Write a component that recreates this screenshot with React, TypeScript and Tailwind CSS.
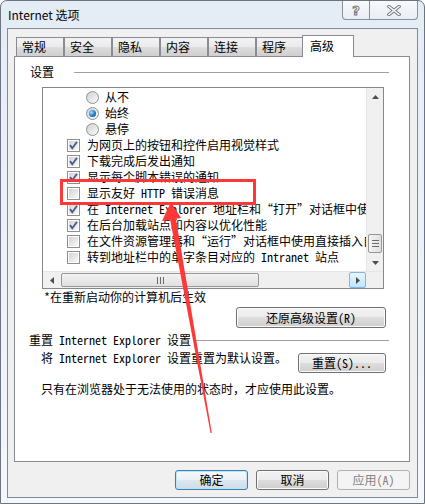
import type { ReactNode } from 'react'

const mono = 'font-["Noto_Sans_Mono_CJK_SC","Noto_Sans_CJK_SC",sans-serif]'

const tabs = ['常规', '安全', '隐私', '内容', '连接', '程序']

const rows: { kind: 'radio' | 'check'; on: boolean; text: string }[] = [
  { kind: 'radio', on: false, text: '从不' },
  { kind: 'radio', on: true, text: '始终' },
  { kind: 'radio', on: false, text: '悬停' },
  { kind: 'check', on: true, text: '为网页上的按钮和控件启用视觉样式' },
  { kind: 'check', on: true, text: '下载完成后发出通知' },
  { kind: 'check', on: true, text: '显示每个脚本错误的通知' },
  { kind: 'check', on: false, text: '显示友好 HTTP 错误消息' },
  { kind: 'check', on: true, text: '在 Internet Explorer 地址栏和“打开”对话框中使用直接插入自动完成' },
  { kind: 'check', on: true, text: '在后台加载站点和内容以优化性能' },
  { kind: 'check', on: false, text: '在文件资源管理器和“运行”对话框中使用直接插入自动完成' },
  { kind: 'check', on: false, text: '转到地址栏中的单字条目对应的 Intranet 站点' },
]

function Check({ on }: { on: boolean }) {
  return (
    <span className="relative flex h-[13px] w-[13px] shrink-0 border border-[#8e8f8f] bg-white p-px">
      <span className="h-full w-full bg-linear-to-br from-[#d2d4d8] to-[#f8f8f8]" />
      {on && (
        <svg className="absolute left-0 top-0" width="11" height="11" viewBox="0 0 11 11">
          <path d="M2 5.2 L4.3 8.2 L9 1.8" fill="none" stroke="#4a5f8e" strokeWidth="1.9" />
        </svg>
      )}
    </span>
  )
}

function Radio({ on }: { on: boolean }) {
  return (
    <span className="flex h-[13px] w-[13px] shrink-0 items-center justify-center rounded-full border border-[#8e8f8f] bg-linear-to-br from-[#d0d2d6] to-[#fafafa]">
      {on && (
        <span className="h-[7px] w-[7px] rounded-full bg-[radial-gradient(circle_at_35%_35%,#a6e0ff,#1f78c8_55%,#0b3f80)]" />
      )}
    </span>
  )
}

function Btn({ children, className = '' }: { children: ReactNode; className?: string }) {
  return (
    <div
      className={`flex items-center justify-center rounded-[3px] border border-[#707070] bg-[linear-gradient(#f2f2f2,#ebebeb_50%,#dddddd_50%,#cfcfcf)] text-[12px] leading-none text-black shadow-[inset_0_0_0_1px_#fbfbfb] ${className}`}
    >
      {children}
    </div>
  )
}

function Tri({ dir }: { dir: 'up' | 'down' | 'left' | 'right' }) {
  const pts = {
    up: '0,4 3.5,0 7,4',
    down: '0,0 3.5,4 7,0',
    left: '4,0 0,3.5 4,7',
    right: '0,0 4,3.5 0,7',
  }[dir]
  const v = dir === 'up' || dir === 'down'
  return (
    <svg width={v ? 7 : 4} height={v ? 4 : 7} viewBox={v ? '0 0 7 4' : '0 0 4 7'}>
      <polygon points={pts} fill="#4d4d4d" />
    </svg>
  )
}

function SettingsList() {
  return (
    <div className={`ml-[27px] mt-[7px] flex h-[202px] w-[342px] flex-col border border-[#828790] bg-white text-[12px] ${mono}`}>
      <div className="flex min-h-0 flex-1">
        <div className="min-w-0 flex-1 overflow-hidden pt-px">
          {rows.map((r) => (
            <div
              key={r.text}
              className={`flex h-[16px] items-center whitespace-nowrap leading-[16px] ${
                r.kind === 'radio' ? 'gap-[6px] pl-[43px]' : 'gap-[7px] pl-[24px]'
              }`}
            >
              {r.kind === 'radio' ? <Radio on={r.on} /> : <Check on={r.on} />}
              <span>{r.text}</span>
            </div>
          ))}
        </div>
        <div className="flex w-[17px] flex-col border-l border-[#e6e6e6] bg-[#f0f0f0]">
          <div className="flex h-[17px] items-center justify-center">
            <Tri dir="up" />
          </div>
          <div className="flex flex-1 flex-col justify-end pb-px">
            <div className="mx-px flex h-[19px] flex-col items-center justify-center gap-[2px] rounded-[2px] border border-[#979797] bg-linear-to-r from-[#f3f3f3] to-[#e0e0e0]">
              <span className="h-px w-[7px] bg-[#6b6b6b]" />
              <span className="h-px w-[7px] bg-[#6b6b6b]" />
              <span className="h-px w-[7px] bg-[#6b6b6b]" />
            </div>
          </div>
          <div className="flex h-[17px] items-center justify-center">
            <Tri dir="down" />
          </div>
        </div>
      </div>
      <div className="flex h-[17px] border-t border-[#e6e6e6] bg-[#f0f0f0]">
        <div className="flex w-[17px] items-center justify-center">
          <Tri dir="left" />
        </div>
        <div className="my-px ml-px flex w-[198px] items-center justify-center gap-[2px] rounded-[2px] border border-[#979797] bg-linear-to-b from-[#f3f3f3] to-[#e0e0e0]">
          <span className="h-[7px] w-px bg-[#6b6b6b]" />
          <span className="h-[7px] w-px bg-[#6b6b6b]" />
          <span className="h-[7px] w-px bg-[#6b6b6b]" />
        </div>
        <div className="flex-1" />
        <div className="flex w-[17px] items-center justify-center rounded-[2px] border border-[#7eb4ea] bg-linear-to-b from-[#eaf6fd] to-[#bde6fd]">
          <Tri dir="right" />
        </div>
        <div className="w-[17px] bg-[#f0f0f0]" />
      </div>
    </div>
  )
}

export default function App() {
  return (
    <div className="relative h-[504px] w-[425px] overflow-hidden bg-white">
      <div className="flex h-[504px] w-[425px] flex-col rounded-t-[7px] border border-[#6c7480] bg-linear-to-b from-[#e4ecf6] to-[#f4f7fb] px-[6px] pb-[5px]">
        {/* title bar */}
        <div className="flex h-[27px] shrink-0 items-start justify-between">
          <span className='self-center pl-px font-["Noto_Sans_CJK_SC",sans-serif] text-[12px] leading-none text-black'>
            Internet 选项
          </span>
          <div className="flex h-[19px] rounded-b-[4px] border border-t-0 border-[#8a9098] bg-linear-to-b from-[#f8fafc] to-[#e9eef4]">
            <div className="flex w-[27px] items-center justify-center border-r border-[#8a9098]">
              <span className='font-["DejaVu_Sans",sans-serif] text-[13px] font-bold leading-none text-white [-webkit-text-stroke:1px_#707880]'>?</span>
            </div>
            <div className="flex w-[47px] items-center justify-center">
              <svg width="14" height="11" viewBox="0 0 14 11">
                <path d="M2 1.5 L12 9.5 M12 1.5 L2 9.5" stroke="#6e7680" strokeWidth="3.4" strokeLinecap="square" />
                <path d="M2 1.5 L12 9.5 M12 1.5 L2 9.5" stroke="#ffffff" strokeWidth="1.6" strokeLinecap="square" />
              </svg>
            </div>
          </div>
        </div>

        {/* body */}
        <div className={`flex flex-1 flex-col border border-[#7f8b97] bg-[#f0f0f0] px-[6px] pt-[6px] text-[12px] text-black ${mono}`}>
          <div className="flex h-[21px] items-end pl-[2px]">
            {tabs.map((t) => (
              <div
                key={t}
                className="h-[19px] w-[48px] border border-b-0 border-[#898c95] bg-[linear-gradient(#f2f2f2,#ebebeb_50%,#dddddd_50%,#cfcfcf)] pl-[5px] leading-[18px]"
              >
                {t}
              </div>
            ))}
            <div className="relative z-10 -mb-px -ml-[2px] h-[22px] w-[52px] border border-b-0 border-[#898c95] bg-white pl-[7px] leading-[19px]">
              高级
            </div>
          </div>

          <div className="flex h-[406px] w-[396px] flex-col border border-[#898c95] bg-white">
            <div className="mt-[7px] flex h-[16px] items-center pl-[15px] pr-[20px]">
              <span className="leading-[16px]">设置</span>
              <span className="ml-[20px] h-px flex-1 bg-[#a0a0a0]" />
            </div>

            <SettingsList />

            <div className="h-[16px] pl-[29px] leading-[16px]">*在重新启动你的计算机后生效</div>
            <div className="mt-[2px] flex justify-end pr-[23px]">
              <Btn className="h-[21px] w-[150px]">还原高级设置(R)</Btn>
            </div>

            <div className="mt-[4px] flex h-[16px] items-center pl-[14px] pr-[20px]">
              <span className="leading-[16px]">重置 Internet Explorer 设置</span>
              <span className="ml-[4px] h-px flex-1 bg-[#a0a0a0]" />
            </div>
            <div className="mt-[2px] flex items-start justify-between pl-[26px] pr-[23px]">
              <span className="leading-[16px]">将 Internet Explorer 设置重置为默认设置。</span>
              <Btn className="mt-[3px] h-[20px] w-[88px]">重置(S)...</Btn>
            </div>
            <div className="mt-[8px] h-[16px] pl-[26px] leading-[16px]">
              只有在浏览器处于无法使用的状态时，才应使用此设置。
            </div>
          </div>

          <div className="mt-[8px] flex w-[396px] justify-end gap-[8px]">
            <div className="flex h-[20px] w-[73px] items-center justify-center rounded-[3px] border border-[#3c7fb1] bg-[linear-gradient(#f3f8fb,#eaf1f6_50%,#dce7ef_50%,#cfdce6)] leading-none shadow-[inset_0_0_0_1px_#bfe3f7]">
              确定
            </div>
            <Btn className="h-[20px] w-[73px]">取消</Btn>
            <div className="flex h-[20px] w-[73px] items-center justify-center rounded-[3px] border border-[#adb2b5] bg-[#f4f4f4] leading-none text-[#838383]">
              应用(A)
            </div>
          </div>
        </div>
      </div>

      {/* annotation: red box and arrow */}
      <div className="pointer-events-none absolute left-[60px] top-[179px] h-[26px] w-[196px] border-[3px] border-[#ff3737]" />
      <svg className="pointer-events-none absolute left-0 top-0" width="425" height="504" viewBox="0 0 425 504">
        <polygon points="171,202 162,221 181,218" fill="#ff3737" />
        <polygon points="170,219 176,219 211.8,433 210.6,433" fill="#ff3737" />
      </svg>
    </div>
  )
}
